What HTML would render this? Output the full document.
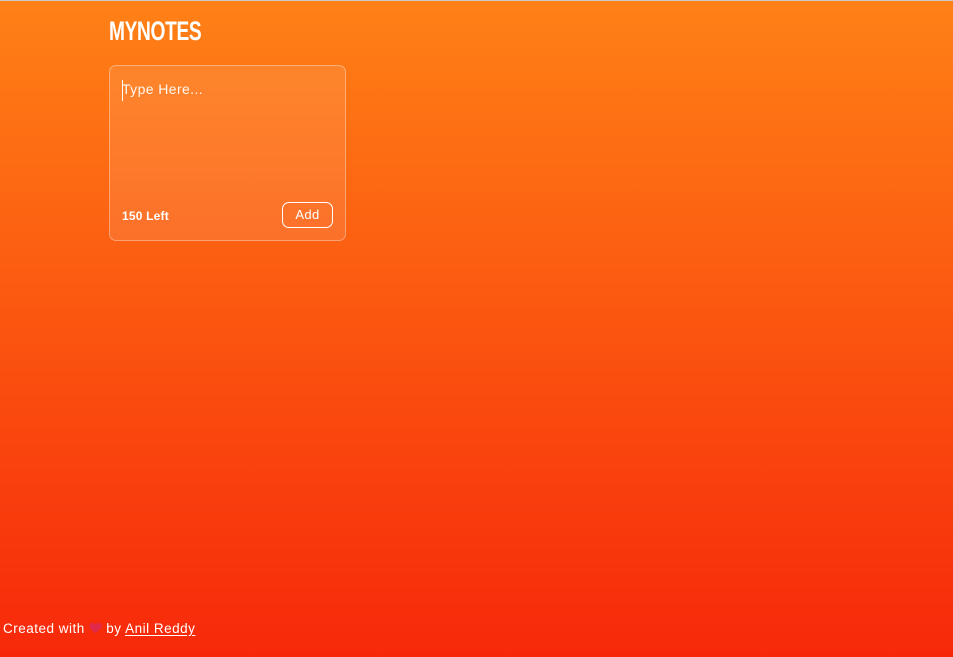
<!DOCTYPE html>
<html><head><style>
html,body{margin:0;width:953px;height:657px;overflow:hidden}
body{background:linear-gradient(180deg,#ff8116 0%,#f7280a 100%);font-family:"Liberation Sans",sans-serif;color:#fff;position:relative;border-top:1px solid #c8c8c8;box-sizing:border-box}
h1{position:absolute;left:109px;top:15px;margin:0;font-weight:bold;font-size:27px;letter-spacing:-0.5px;transform:scaleX(0.71);transform-origin:left;white-space:nowrap}
.card{position:absolute;left:109px;top:64px;width:235px;height:174px;border:1px solid rgba(255,255,255,.35);border-radius:7px;background:rgba(255,255,255,.1)}
.ph{position:absolute;left:12px;top:15px;font-size:14px;letter-spacing:0.4px;color:#fff8f0}
.cur{position:absolute;left:12px;top:14px;width:1px;height:21px;background:#fff}
.left{position:absolute;left:12px;top:143px;font-size:12px;font-weight:bold;letter-spacing:0.2px}
.btn{position:absolute;left:172px;top:136px;width:51px;height:26px;border:1px solid #fff;border-radius:7px;box-sizing:border-box;font-size:13px;text-align:center;line-height:24px;letter-spacing:0.4px}
.foot{position:absolute;left:3px;top:620px;font-size:13.5px;letter-spacing:0.5px;white-space:nowrap}
.foot u{text-underline-offset:2px}
.foot svg{vertical-align:-1px}
</style></head><body>
<h1>MYNOTES</h1>
<div class="card"><div class="cur"></div><div class="ph">Type Here...</div><div class="left">150 Left</div><div class="btn">Add</div></div>
<div class="foot">Created with <svg width="13" height="12" viewBox="0 0 13 12"><path d="M6.5 11.5 L1.3 6.3 C-0.5 4.5 0.3 1 3.3 0.8 C4.8 0.7 5.9 1.6 6.5 2.6 C7.1 1.6 8.2 0.7 9.7 0.8 C12.7 1 13.5 4.5 11.7 6.3 Z" fill="#e0284a"/></svg> by <u>Anil Reddy</u></div>
</body></html>
